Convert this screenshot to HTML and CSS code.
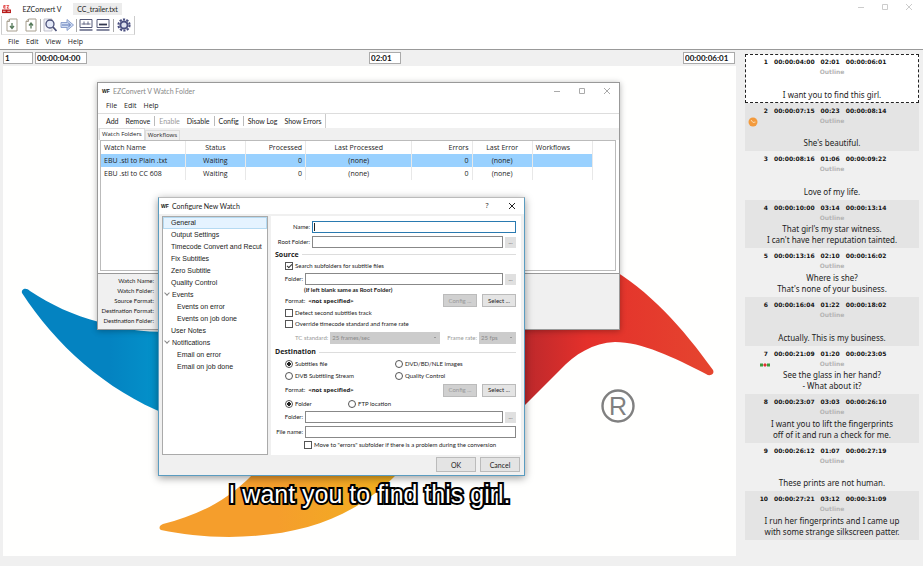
FILE: index.html
```html
<!DOCTYPE html>
<html lang="en">
<head>
<meta charset="utf-8">
<title>EZConvert V</title>
<link rel="stylesheet" href="styles.css">
</head>
<body>
<div class="app">
  <header class="titlebar">
    <svg class="app-icon" viewBox="0 0 10 10"><path d="M2 .5h2M2 .5v3h2M2 2h2M5 .5h2.500l-2 3h2.500" stroke="#d22" stroke-width=".9" fill="none"/><path d="M0 5h10v4H0z" fill="#b81c1c"/><path d="M1 7h3M6 7h3" stroke="#fff" stroke-width=".8"/></svg>
    <button class="file-tab">EZConvert V</button>
    <button class="file-tab file-tab-current">CC_trailer.txt</button>
    <div class="window-buttons window-buttons-main">
      <button aria-label="Minimize"><svg viewBox="0 0 8 8"><path d="M1 4.500h6"/></svg></button>
      <button aria-label="Maximize"><svg viewBox="0 0 8 8"><path d="M1.500 1.500h5v5h-5z"/></svg></button>
      <button aria-label="Close"><svg viewBox="0 0 8 8"><path d="M1 1l6 6M7 1l-6 6"/></svg></button>
    </div>
  </header>
  <div class="toolbar">
    <button aria-label="Import"><svg viewBox="0 0 14 14"><path d="M4.500 1h7.500v12H2V3.500zM4.500 1v2.500H2" fill="#fff" stroke="#a8a090"/><path d="M7 5v5M5 8l2 2.500L9 8" stroke="#567a5a" stroke-width="1.300" fill="none"/></svg></button>
    <button aria-label="Export"><svg viewBox="0 0 14 14"><path d="M4.500 1h7.500v12H2V3.500zM4.500 1v2.500H2" fill="#fff" stroke="#a8a090"/><path d="M7 10.500v-5M5 7.500L7 5l2 2.500" stroke="#567a5a" stroke-width="1.300" fill="none"/></svg></button>
    <span class="sep"></span>
    <button aria-label="Find"><svg viewBox="0 0 14 14"><path d="M1 1h8v12H1z" fill="#f4f4f8" stroke="#b4b4c0" stroke-width=".8"/><circle cx="7" cy="6" r="4" fill="#e4e9f8" stroke="#4a5078" stroke-width="1.300"/><path d="M10 9l3.500 4" stroke="#4a5078" stroke-width="1.800"/></svg></button>
    <button aria-label="Convert"><svg viewBox="0 0 14 14"><path d="M1 4.500h6V1.500L13.500 7 7 12.500v-3H1z" fill="#cfdcf2" stroke="#8298c8" stroke-width=".9"/><path d="M2 7h8M8 4.500L10.500 7 8 9.500" stroke="#607ab8" fill="none"/></svg></button>
    <span class="sep"></span>
    <button aria-label="Timing view"><svg viewBox="0 0 14 14"><path d="M1 1.500h12v8H1z" fill="#fff" stroke="#555a78"/><path d="M2.500 6h9M5 3.500v3M9 3.500v3" stroke="#555a78" stroke-width=".9"/><path d="M.5 12h13" stroke="#7a7e98" stroke-width="1.800"/></svg></button>
    <button aria-label="Subtitle view"><svg viewBox="0 0 14 14"><path d="M1 1.500h12v8H1z" fill="#fff" stroke="#555a78"/><path d="M3 6.500h8" stroke="#333850" stroke-width="1.800"/><path d="M.5 12h13" stroke="#7a7e98" stroke-width="1.800"/></svg></button>
    <span class="sep"></span>
    <button aria-label="Settings"><svg viewBox="0 0 14 14"><circle cx="7" cy="7" r="5.600" fill="none" stroke="#4a4f80" stroke-width="2" stroke-dasharray="2.200 1.320"/><circle cx="7" cy="7" r="3.600" fill="#dfe2f0" stroke="#4a4f80" stroke-width="2"/></svg></button>
  </div>
  <nav class="menubar"><button>File</button><button>Edit</button><button>View</button><button>Help</button></nav>
  <main class="workspace">
    <section class="editor">
      <div class="timebar">
        <input class="tc tc-index" aria-label="Subtitle number" value="1">
        <input class="tc tc-in" aria-label="In time" value="00:00:04:00">
        <input class="tc tc-duration" aria-label="Duration" value="02:01">
        <input class="tc tc-out" aria-label="Out time" value="00:00:06:01">
      </div>
      <div class="stage">
        <svg class="logo" viewBox="0 0 733 491" preserveAspectRatio="xMinYMin slice">
          <defs>
            <linearGradient id="red" x1="0" x2="1"><stop offset="0" stop-color="#b8282c"/><stop offset=".35" stop-color="#e4302b"/><stop offset="1" stop-color="#e5452f"/></linearGradient>
            <linearGradient id="blue" x1="0" x2="1"><stop offset=".6" stop-color="#0483c1"/><stop offset="1" stop-color="#0495cc"/></linearGradient>
            <linearGradient id="orange" x1="0" x2="1"><stop offset=".5" stop-color="#f59e2c"/><stop offset="1" stop-color="#f1b01e"/></linearGradient>
          </defs>
          <path fill="url(#blue)" d="M19 227C18 223 23 221 27 225C48 239 70 249 96 256C118 263 140 266 165 266V349C102 324 52 278 19 227z"/>
          <path fill="url(#orange)" d="M158 464C155 462 157 459 160 458C190 450 220 439 250 408H394C350 452 300 470 226 471C200 471 178 468 158 464z"/>
          <path fill="url(#red)" d="M515 200H604C646 224 680 262 710 304C712 308 707 311 703 308C670 291 639 276 612 276C590 277 572 288 557 304L515 346z"/>
          <circle cx="615" cy="340" r="15.500" fill="none" stroke="#808080" stroke-width="2.400"/>
          <text class="logo-r" x="615" y="349">R</text>
        </svg>
        <p class="caption">I want you to find this girl.</p>
      </div>
    </section>
    <aside class="sidebar">
      <ol class="cues">
        <li class="cue cue-current"><p class="cue-time"><b>1</b><span>00:00:04:00</span><span>02:01</span><span>00:00:06:01</span></p><p class="cue-style">Outline</p><p class="cue-text">I want you to find this girl.</p></li>
        <li class="cue"><p class="cue-time"><b>2</b><span>00:00:07:15</span><span>00:23</span><span>00:00:08:14</span></p><p class="cue-style">Outline</p><p class="cue-text">She's beautiful.</p><svg class="mark mark-clock" viewBox="0 0 10 10"><circle cx="5" cy="5" r="4.500" fill="#f39a3c"/><path d="M3 3l2 2.500L7.500 5" stroke="#fbd9ad" fill="none"/></svg></li>
        <li class="cue"><p class="cue-time"><b>3</b><span>00:00:08:16</span><span>01:06</span><span>00:00:09:22</span></p><p class="cue-style">Outline</p><p class="cue-text">Love of my life.</p></li>
        <li class="cue"><p class="cue-time"><b>4</b><span>00:00:10:00</span><span>03:14</span><span>00:00:13:14</span></p><p class="cue-style">Outline</p><p class="cue-text">That girl's my star witness.<br>I can't have her reputation tainted.</p></li>
        <li class="cue"><p class="cue-time"><b>5</b><span>00:00:13:16</span><span>02:10</span><span>00:00:16:02</span></p><p class="cue-style">Outline</p><p class="cue-text">Where is she?<br>That's none of your business.</p></li>
        <li class="cue"><p class="cue-time"><b>6</b><span>00:00:16:04</span><span>01:22</span><span>00:00:18:02</span></p><p class="cue-style">Outline</p><p class="cue-text">Actually. This is my business.</p></li>
        <li class="cue"><p class="cue-time"><b>7</b><span>00:00:21:09</span><span>01:20</span><span>00:00:23:05</span></p><p class="cue-style">Outline</p><p class="cue-text">See the glass in her hand?<br>- What about it?</p><svg class="mark mark-dots" viewBox="0 0 10 4"><path d="M0 .5h3v3H0z" fill="#3c9a3c"/><path d="M5 0l2 2-2 2-2-2z" fill="#e03030"/><path d="M7 .5h3v3H7z" fill="#3c9a3c"/></svg></li>
        <li class="cue"><p class="cue-time"><b>8</b><span>00:00:23:07</span><span>03:03</span><span>00:00:26:10</span></p><p class="cue-style">Outline</p><p class="cue-text">I want you to lift the fingerprints<br>off of it and run a check for me.</p></li>
        <li class="cue"><p class="cue-time"><b>9</b><span>00:00:26:12</span><span>01:07</span><span>00:00:27:19</span></p><p class="cue-style">Outline</p><p class="cue-text">These prints are not human.</p></li>
        <li class="cue"><p class="cue-time"><b>10</b><span>00:00:27:21</span><span>03:12</span><span>00:00:31:09</span></p><p class="cue-style">Outline</p><p class="cue-text">I run her fingerprints and I came up<br>with some strange silkscreen patter.</p></li>
      </ol>
    </aside>
  </main>
</div>

<section class="watch" aria-label="EZConvert V Watch Folder">
  <header class="win-title win-title-inactive">
    <b class="wf">WF</b><h2>EZConvert V Watch Folder</h2>
    <div class="window-buttons">
      <button aria-label="Minimize"><svg viewBox="0 0 8 8"><path d="M1 4.500h6"/></svg></button>
      <button aria-label="Maximize"><svg viewBox="0 0 8 8"><path d="M1.500 1.500h5v5h-5z"/></svg></button>
      <button aria-label="Close"><svg viewBox="0 0 8 8"><path d="M1 1l6 6M7 1l-6 6"/></svg></button>
    </div>
  </header>
  <nav class="watch-menu"><button>File</button><button>Edit</button><button>Help</button></nav>
  <div class="watch-tools">
    <button>Add</button><button>Remove</button><span class="sep"></span><button disabled>Enable</button><button>Disable</button><span class="sep"></span><button>Config</button><span class="sep"></span><button>Show Log</button><button>Show Errors</button>
  </div>
  <div class="tabs" role="tablist"><button role="tab" aria-selected="true">Watch Folders</button><button role="tab" aria-selected="false">Workflows</button></div>
  <div class="watch-pane">
    <table class="jobs">
      <colgroup><col class="c-name"><col class="c-mid"><col class="c-mid"><col class="c-last"><col class="c-mid"><col class="c-mid"><col class="c-mid"></colgroup>
      <thead><tr><th class="l">Watch Name</th><th>Status</th><th class="r">Processed</th><th>Last Processed</th><th class="r">Errors</th><th>Last Error</th><th class="l">Workflows</th></tr></thead>
      <tbody>
        <tr class="selected"><td class="l">EBU .stl to Plain .txt</td><td>Waiting</td><td class="r">0</td><td>(none)</td><td class="r">0</td><td>(none)</td><td></td></tr>
        <tr><td class="l">EBU .stl to CC 608</td><td>Waiting</td><td class="r">0</td><td>(none)</td><td class="r">0</td><td>(none)</td><td></td></tr>
      </tbody>
    </table>
  </div>
  <dl class="details"><dt>Watch Name:</dt><dt>Watch Folder:</dt><dt>Source Format:</dt><dt>Destination Format:</dt><dt>Destination Folder:</dt></dl>
</section>

<form class="dialog" aria-label="Configure New Watch">
  <header class="win-title">
    <b class="wf">WF</b><h2>Configure New Watch</h2>
    <div class="window-buttons window-buttons-dialog">
      <button type="button" aria-label="Help">?</button>
      <button type="button" aria-label="Close"><svg viewBox="0 0 8 8"><path d="M1 1l6 6M7 1l-6 6"/></svg></button>
    </div>
  </header>
  <div class="dialog-body">
    <ul class="tree">
      <li class="current">General</li><li>Output Settings</li><li>Timecode Convert and Recut</li><li>Fix Subtitles</li><li>Zero Subtitle</li><li>Quality Control</li>
      <li class="open">Events</li><li class="child">Events on error</li><li class="child">Events on job done</li><li>User Notes</li>
      <li class="open">Notifications</li><li class="child">Email on error</li><li class="child">Email on job done</li>
    </ul>
    <div class="panel">
      <div class="row"><label class="wide" for="name">Name:</label><input class="field focus" id="name" type="text" value=""></div>
      <div class="row"><label class="wide" for="root">Root Folder:</label><input class="field" id="root" type="text"><button type="button" class="dots">...</button></div>
      <h3>Source</h3>
      <div class="row indent"><input type="checkbox" id="search" checked><label for="search">Search subfolders for subtitle files</label></div>
      <div class="row"><label class="narrow" for="src">Folder:</label><input class="field" id="src" type="text"><button type="button" class="dots">...</button></div>
      <div class="row hint">(If left blank same as Root Folder)</div>
      <div class="row indent"><span>Format:</span><b>&lt;not specified&gt;</b><button type="button" class="btn push" disabled>Config ...</button><button type="button" class="btn">Select ...</button></div>
      <div class="row indent"><input type="checkbox" id="detect"><label for="detect">Detect second subtitles track</label></div>
      <div class="row indent"><input type="checkbox" id="override"><label for="override">Override timecode standard and frame rate</label></div>
      <div class="row rates"><label for="std">TC standard:</label><select id="std" class="std" disabled><option>25 frames/sec</option></select><label for="rate">Frame rate:</label><select id="rate" class="rate" disabled><option>25 fps</option></select></div>
      <h3>Destination</h3>
      <div class="row pair"><span><input type="radio" name="kind" id="k1" checked><label for="k1">Subtitles file</label></span><span><input type="radio" name="kind" id="k2"><label for="k2">DVD/BD/NLE images</label></span></div>
      <div class="row pair"><span><input type="radio" name="kind" id="k3"><label for="k3">DVB Subtitling Stream</label></span><span><input type="radio" name="kind" id="k4"><label for="k4">Quality Control</label></span></div>
      <div class="row indent"><span>Format:</span><b>&lt;not specified&gt;</b><button type="button" class="btn push" disabled>Config ...</button><button type="button" class="btn">Select ...</button></div>
      <div class="row pair pair-near"><span><input type="radio" name="place" id="p1" checked><label for="p1">Folder</label></span><span><input type="radio" name="place" id="p2"><label for="p2">FTP location</label></span></div>
      <div class="row"><label class="narrow" for="dst">Folder:</label><input class="field" id="dst" type="text"><button type="button" class="dots">...</button></div>
      <div class="row"><label class="narrow" for="fname">File name:</label><input class="field" id="fname" type="text"></div>
      <div class="row deep"><input type="checkbox" id="move"><label for="move">Move to "errors" subfolder if there is a problem during the conversion</label></div>
    </div>
  </div>
  <footer class="dialog-foot"><button type="button" class="btn btn-large">OK</button><button type="button" class="btn btn-large">Cancel</button></footer>
</form>
</body>
</html>
```

FILE: styles.css
```css
* { box-sizing: border-box; }
body { margin: 0; height: 100vh; overflow: hidden; position: relative; background: #fff; color: #222; font: 7px/10px "Open Sans", sans-serif; font-variant-ligatures: none; }
button, input, select { font: inherit; color: inherit; margin: 0; padding: 0; border: 0; background: none; border-radius: 0; }
button { white-space: nowrap; }
h2, h3, p, ol, ul, dl { margin: 0; padding: 0; font-size: inherit; font-weight: inherit; list-style: none; }
svg { display: block; }

.app { display: flex; flex-direction: column; height: 100%; }
.titlebar { display: flex; height: 16px; align-items: flex-start; padding-top: 3px; }
.app-icon { width: 9px; height: 9px; margin: 2px 0 0 2px; }
.file-tab { width: 62px; height: 12px; font: 7px/10px Lato, sans-serif; }
.file-tab-current { width: 49px; background: #ececec; }

.window-buttons { display: flex; margin-left: auto; gap: 17px; padding-right: 8px; }
.window-buttons button { width: 8px; height: 8px; }
.window-buttons svg { fill: none; stroke: #aaa; stroke-width: 1; }
.window-buttons-main svg { stroke: #ccc; }
.window-buttons-main { gap: 16px; padding-right: 10px; }
.window-buttons-dialog svg { stroke: #222; }

.toolbar { display: flex; align-items: center; align-self: flex-start; gap: 3px; height: 19px; padding: 0 3px; margin-left: 1px; border: 1px solid #ccc; border-top: 0; border-bottom-color: #e4e4e4; }
.toolbar svg { width: 14px; height: 14px; }
.toolbar button:first-child { margin-right: 2px; }
.sep { width: 1px; height: 13px; background: #aaa; }
.toolbar .sep { margin: 0 -1px; }
.toolbar .sep:last-of-type { margin: 0; }
.menubar { display: flex; gap: 7px; height: 14px; padding-left: 8px; }
.workspace { display: flex; flex: 1; min-height: 0; border-top: 1px solid #999; }

.editor { display: flex; flex-direction: column; flex: 1; min-width: 0; padding: 0 4px 10px 3px; background: #f0f0f0; }
.timebar { display: grid; grid-template-columns: 30px 52px 1fr 52px; gap: 2px; height: 16px; align-items: center; padding-right: 1px; }
.tc { width: 100%; height: 12px; padding: 0 1px; background: #fff; border: 1px solid #aaa; font: 700 8px/10px Lato, sans-serif; color: #111; }
.tc-duration { width: 32px; justify-self: center; }
.stage { position: relative; display: flex; flex: 1; min-height: 0; align-items: flex-end; justify-content: center; background: #fffffe; }
.logo { position: absolute; inset: 0; width: 100%; height: 100%; }
.logo-r { font: 25px "Liberation Sans", sans-serif; fill: #808080; text-anchor: middle; }
.caption { position: relative; padding-bottom: 48px; font: 25px/28px "Liberation Sans", sans-serif; color: #fff; -webkit-text-stroke: 4px #000; paint-order: stroke fill; }

.sidebar { width: 183px; padding: 4px 4px 26px 5px; background: #f0f0f0; }
.cues { display: grid; grid-template-rows: repeat(10, 1fr); height: 100%; }
.cue { position: relative; display: flex; flex-direction: column; min-height: 0; padding: 3px 0; text-align: center; }
.cue:nth-child(even) { background: #e4e4e4; }
.cue-current { background: #fff; outline: 1px dashed #222; outline-offset: -1px; }
.cue-time { display: flex; gap: 6px; color: #111; font: 700 6px/10px "DejaVu Sans", sans-serif; }
.cue-time b { width: 23px; text-align: right; }
.cue-style { color: #b4b4b4; font: 700 6px/10px "DejaVu Sans", sans-serif; }
.cue-text { margin-top: auto; font: 8px/11px "Noto Sans", sans-serif; }
.mark { position: absolute; left: 3px; top: 14px; width: 10px; }
.mark-dots { left: 15px; top: 17px; }

.watch { position: absolute; left: 97px; top: 82px; width: 523px; height: 248px; display: flex; flex-direction: column; background: #fff; border: 1px solid #999; box-shadow: 0 1px 6px rgba(0,0,0,.3); }
.win-title { display: flex; align-items: center; height: 16px; padding-left: 4px; background: #fff; }
.win-title h2 { font: 7px/10px Lato, sans-serif; }
.win-title-inactive { color: #888; }
.wf { width: 11px; color: #111; font: 700 5px/8px "Liberation Sans", sans-serif; }
.watch-menu, .watch-tools { display: flex; align-items: center; gap: 7px; height: 14px; padding-left: 8px; }
.watch-tools { border-top: 1px solid #ddd; height: 15px; font-family: Lato, sans-serif; }
.watch-tools .sep { height: 10px; margin: 0 -3px; background: #bbb; }
.watch-tools button:last-child { height: 14px; padding-right: 3px; border-right: 1px solid #ccc; }
button:disabled { color: #999; }
.tabs { display: flex; align-items: flex-end; height: 12px; padding-left: 1px; background: #f0f0f0; }
.tabs button { height: 10px; padding: 0 2px; border: 1px solid #ddd; border-bottom: 0; font-size: 6px; line-height: 9px; }
.tabs button[aria-selected="true"] { height: 12px; background: #fff; }
.watch-pane { flex: 1; margin: 0 3px 2px 2px; border: 1px solid #bbb; background: #fff; }
.jobs { width: 492px; table-layout: fixed; border-collapse: collapse; }
.jobs th, .jobs td { height: 13px; padding: 0 3px; border-right: 1px solid #e8e8e8; font-weight: 400; text-align: center; }
.jobs .l { text-align: left; }
.jobs .r { text-align: right; }
.jobs .selected { background: #99d1ff; }
.c-name { width: 84px; }
.c-mid { width: 60px; }
.c-last { width: 106px; }
.details { height: 56px; padding-top: 2px; border-top: 1px solid #999; background: #f0f0f0; }
.details dt { width: 56px; text-align: right; font: 6px/10px Lato, sans-serif; white-space: nowrap; }

.dialog { position: absolute; left: 158px; top: 197px; width: 367px; height: 279px; display: flex; flex-direction: column; background: #f0f0f0; border: 1px solid #5a9cc0; border-top-color: #bbb; box-shadow: 0 2px 8px rgba(0,0,0,.4); }
.window-buttons-dialog { align-items: center; }
.window-buttons-dialog button { line-height: 8px; }
.dialog .win-title { padding-left: 2px; }
.dialog-body { display: flex; flex: 1; gap: 3px; min-height: 0; padding: 2px 3px 0; }
.tree { width: 106px; background: #fff; border: 1px solid #aaa; font: 7px/12px "Liberation Sans", sans-serif; }
.tree li { height: 12px; padding-left: 8px; white-space: nowrap; overflow: hidden; }
.tree .current { background: #e5f3ff; outline: 1px solid #b5daf2; outline-offset: -1px; }
.tree .child { padding-left: 14px; }
.tree .open { padding-left: 2px; }
.tree .open::before { content: ""; display: inline-block; width: 3px; height: 3px; margin: 0 3px 2px 0; border: solid #888; border-width: 0 1px 1px 0; transform: rotate(45deg); }
.panel { flex: 1; display: grid; grid-template-rows: 16px 14px 11px 12px 14px 7px 15px 10px 12px 16px 12px 12px 12px 16px 12px 14px 15px 12px; align-content: start; padding: 3px 5px 0 4px; background: #fff; font: 6px/10px Lato, sans-serif; }
.row { display: flex; align-items: center; gap: 2px; white-space: nowrap; }
.row b { margin-left: 1px; font: 700 6px/10px "Open Sans", sans-serif; }
.wide { width: 35px; text-align: right; }
.narrow { width: 28px; text-align: right; }
.indent { padding-left: 10px; }
.deep { padding-left: 29px; }
.hint { padding-left: 29px; font-weight: 700; }
.field { flex: 1; min-width: 0; height: 12px; padding: 0 1px; border: 1px solid #888; background: #fff; outline: none; }
.focus { border-color: #2a7ab0; background: linear-gradient(#222, #222) 1px center / 1px 8px no-repeat, #fff; }
.dots { width: 11px; height: 11px; background: #e0e0e0; color: #555; line-height: 8px; }
.btn { width: 34px; height: 13px; border: 1px solid #bbb; background: #e4e4e4; line-height: 10px; }
.btn:disabled { background: #d0d0d0; }
.push { margin-left: auto; margin-right: 3px; }
.btn-large { width: 40px; height: 15px; font: 7px/10px Lato, sans-serif; }
.panel h3 { display: flex; align-items: center; gap: 3px; font: 700 7px/10px "Open Sans", sans-serif; }
.panel h3::after { content: ""; flex: 1; height: 1px; background: #ddd; }
input[type="checkbox"], input[type="radio"] { appearance: none; flex: none; width: 8px; height: 8px; border: 1px solid #555; background: #fff; }
input[type="radio"] { border-radius: 50%; }
input[type="radio"]:checked { background: radial-gradient(circle, #222 0 2px, #fff 2px); }
input[type="checkbox"]:checked::after { content: ""; display: block; width: 2px; height: 4px; margin: 0 0 0 2px; border: solid #333; border-width: 0 1px 1px 0; transform: rotate(45deg); }
.rates { padding-left: 20px; color: #999; }
.rates select { appearance: none; height: 12px; padding-left: 2px; opacity: 1; color: #888; background: conic-gradient(from 315deg at 50% 70%, #999 90deg, transparent 0) right 3px center / 4px 2px no-repeat, #ccc; }
.rates .std { width: 110px; margin-right: 5px; }
.rates .rate { flex: 1; }
.pair { padding-left: 10px; gap: 0; }
.pair span { display: flex; align-items: center; gap: 2px; width: 110px; }
.pair-near span { width: 63px; }
.dialog-foot { display: flex; justify-content: flex-end; gap: 4px; height: 20px; padding: 2px 4px; }
```
